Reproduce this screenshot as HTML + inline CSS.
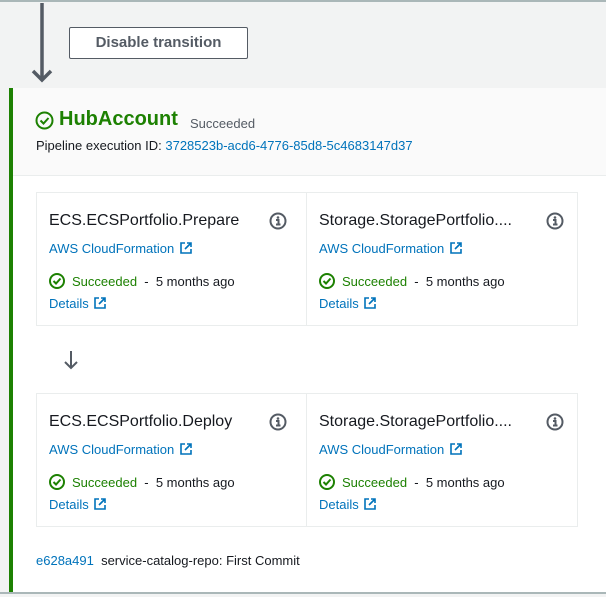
<!DOCTYPE html>
<html><head><style>
*{margin:0;padding:0;box-sizing:border-box}
body{width:606px;height:597px;overflow:hidden;background:#f2f3f3;font-family:"Liberation Sans",Arial,sans-serif;position:relative;color:#16191f}
.a{position:absolute}
.link{color:#0073bb}
.box{position:absolute;border:1px solid #eaeded;background:#fff}
.t{font-size:16px;color:#16191f;position:absolute;left:12px;top:19px;white-space:nowrap}
.cf{font-size:13px;position:absolute;left:12px;top:48px;color:#0073bb}
.st{font-size:13px;position:absolute;left:12px;top:80px;display:flex;align-items:center;white-space:nowrap}
.dt{font-size:13px;position:absolute;left:12px;top:103px;color:#0073bb}
.info{position:absolute;top:19px}
.cf svg,.dt svg{vertical-align:-1px;margin-left:2px}
</style></head><body>
<div class="a" style="left:0;top:0;width:606px;height:2px;background:#aab7b8"></div>
<svg class="a" style="left:30px;top:3px" width="24" height="80"><path d="M12 0V77M3 68L12 77L21 68" stroke="#545b64" stroke-width="3.5" fill="none"/></svg>
<div class="a" style="left:69px;top:27px;width:179px;height:32px;border:1px solid #545b64;border-radius:2px;background:#fff;font-size:15px;font-weight:bold;color:#545b64;text-align:center;line-height:30px">Disable transition</div>
<div class="a" style="left:9px;top:88px;width:597px;height:504px;background:#fff;border-left:4px solid #1d8102"></div>
<div class="a" style="left:13px;top:88px;width:593px;height:88px;background:#fafafa;border-bottom:1px solid #eaeded"></div>
<div class="a" style="left:0;top:592px;width:606px;height:2px;background:#aab7b8"></div>
<svg class="a" style="left:35px;top:111px" width="19" height="19"><circle cx="9.5" cy="9.5" r="8" stroke="#1d8102" stroke-width="2" fill="none"/><path d="M5.5 9.5l3 3 5-5.5" stroke="#1d8102" stroke-width="2" fill="none"/></svg>
<div class="a" style="left:59px;top:108px;font-size:20px;font-weight:bold;color:#1d8102">HubAccount</div>
<div class="a" style="left:190px;top:116px;font-size:13px;color:#545b64">Succeeded</div>
<div class="a" style="left:36px;top:138px;font-size:13px;color:#16191f">Pipeline execution ID: <span class="link">3728523b-acd6-4776-85d8-5c4683147d37</span></div>

<svg width="0" height="0" style="position:absolute"><defs>
<g id="ok"><circle cx="8" cy="8" r="7" stroke="#1d8102" stroke-width="2" fill="none"/><path d="M4.5 8l2.5 2.5 4.5-5" stroke="#1d8102" stroke-width="2" fill="none"/></g>
<g id="ext"><path d="M5 1H1v10h10V7M7 1h4v4M11 1L5 7" stroke="#0073bb" stroke-width="1.6" fill="none"/></g>
<g id="inf"><circle cx="9" cy="9" r="7.5" stroke="#545b64" stroke-width="2" fill="none"/><circle cx="9" cy="5.5" r="1.3" fill="#545b64"/><path d="M7 8h2.5v4.5M7 12.5h4.5" stroke="#545b64" stroke-width="2" fill="none"/></g>
</defs></svg>

<div class="box" style="left:36px;top:192px;width:271px;height:134px">
<div class="t">ECS.ECSPortfolio.Prepare</div>
<svg class="info" style="left:232px" width="18" height="18"><use href="#inf"/></svg>
<div class="cf">AWS CloudFormation <svg width="12" height="12"><use href="#ext"/></svg></div>
<div class="st"><svg width="16" height="16" style="margin-right:7px"><use href="#ok"/></svg><span style="color:#1d8102">Succeeded</span>&nbsp; - &nbsp;5 months ago</div>
<div class="dt">Details <svg width="12" height="12"><use href="#ext"/></svg></div>
</div>
<div class="box" style="left:306px;top:192px;width:272px;height:134px">
<div class="t">Storage.StoragePortfolio....</div>
<svg class="info" style="left:239px" width="18" height="18"><use href="#inf"/></svg>
<div class="cf">AWS CloudFormation <svg width="12" height="12"><use href="#ext"/></svg></div>
<div class="st"><svg width="16" height="16" style="margin-right:7px"><use href="#ok"/></svg><span style="color:#1d8102">Succeeded</span>&nbsp; - &nbsp;5 months ago</div>
<div class="dt">Details <svg width="12" height="12"><use href="#ext"/></svg></div>
</div>
<svg class="a" style="left:63px;top:350px" width="16" height="20"><path d="M8 1V18M2 12L8 18L14 12" stroke="#545b64" stroke-width="2" fill="none"/></svg>
<div class="box" style="left:36px;top:393px;width:271px;height:134px">
<div class="t">ECS.ECSPortfolio.Deploy</div>
<svg class="info" style="left:232px" width="18" height="18"><use href="#inf"/></svg>
<div class="cf">AWS CloudFormation <svg width="12" height="12"><use href="#ext"/></svg></div>
<div class="st"><svg width="16" height="16" style="margin-right:7px"><use href="#ok"/></svg><span style="color:#1d8102">Succeeded</span>&nbsp; - &nbsp;5 months ago</div>
<div class="dt">Details <svg width="12" height="12"><use href="#ext"/></svg></div>
</div>
<div class="box" style="left:306px;top:393px;width:272px;height:134px">
<div class="t">Storage.StoragePortfolio....</div>
<svg class="info" style="left:239px" width="18" height="18"><use href="#inf"/></svg>
<div class="cf">AWS CloudFormation <svg width="12" height="12"><use href="#ext"/></svg></div>
<div class="st"><svg width="16" height="16" style="margin-right:7px"><use href="#ok"/></svg><span style="color:#1d8102">Succeeded</span>&nbsp; - &nbsp;5 months ago</div>
<div class="dt">Details <svg width="12" height="12"><use href="#ext"/></svg></div>
</div>
<div class="a" style="left:36px;top:553px;font-size:13px"><span class="link">e628a491</span>&nbsp; service-catalog-repo: First Commit</div>
</body></html>
